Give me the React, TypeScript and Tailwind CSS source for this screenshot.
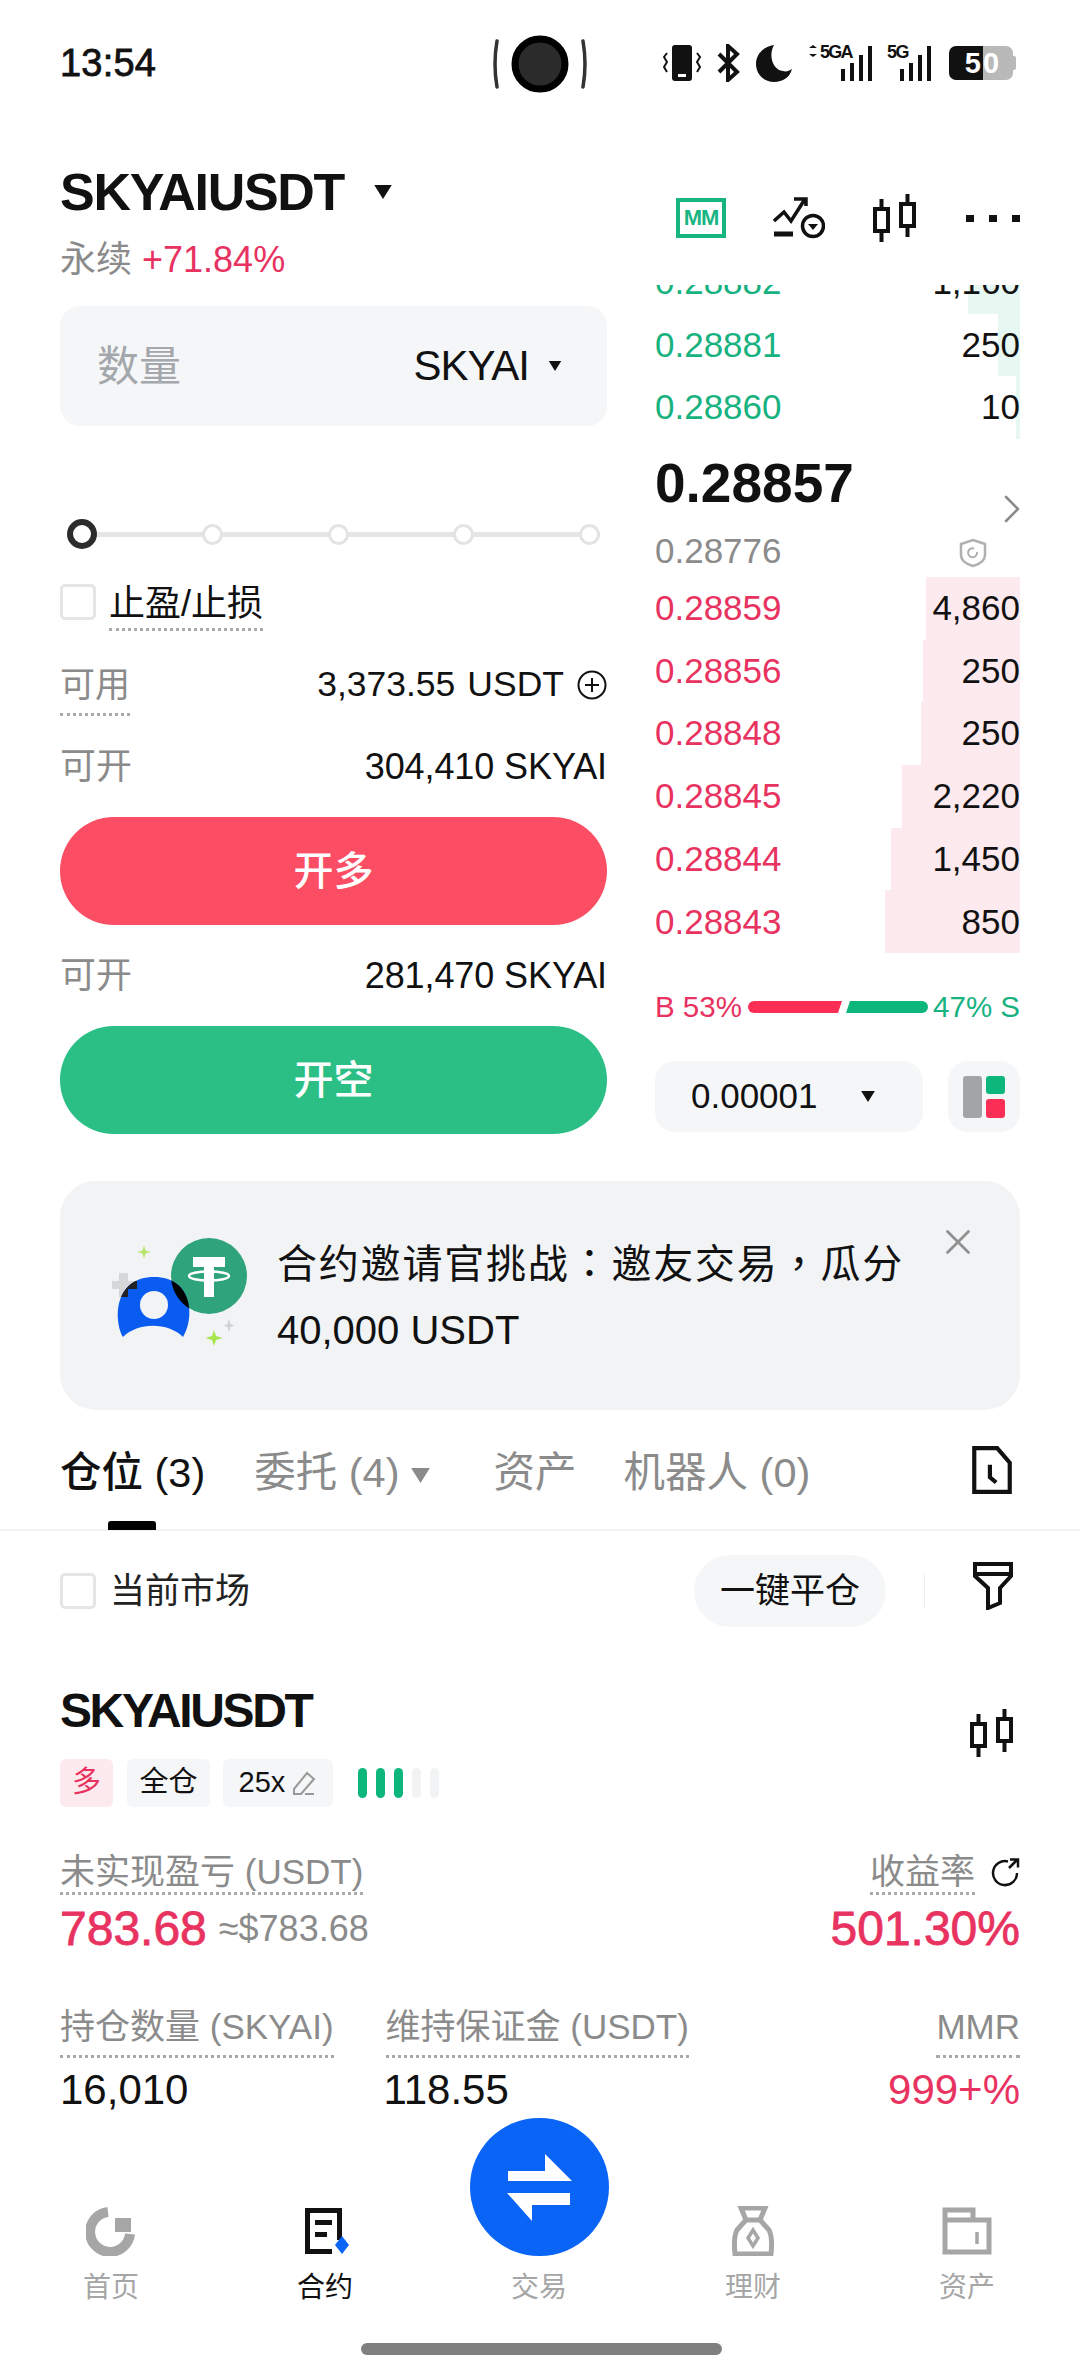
import React from "react";
import { X, ChevronRight } from "lucide-react";

const RED = "text-[#e8325f]";
const GREEN = "text-[#17b27f]";

const bids = [
  { p: "0.28882", q: "1,160", bar: 52 },
  { p: "0.28881", q: "250", bar: 22 },
  { p: "0.28860", q: "10", bar: 4 },
];
const asks = [
  { p: "0.28859", q: "4,860", bar: 94 },
  { p: "0.28856", q: "250", bar: 97 },
  { p: "0.28848", q: "250", bar: 99 },
  { p: "0.28845", q: "2,220", bar: 118 },
  { p: "0.28844", q: "1,450", bar: 129 },
  { p: "0.28843", q: "850", bar: 135 },
];

function Caret({ className }: { className: string }) {
  return (
    <svg viewBox="0 0 10 8" className={className} fill="currentColor">
      <path d="M0 0h10L5 8z" />
    </svg>
  );
}

function Candles({ className }: { className: string }) {
  return (
    <svg viewBox="0 0 46 50" className={className} fill="none" stroke="currentColor" strokeWidth="4">
      <rect x="3" y="16" width="13" height="22" />
      <path d="M9.500 6v10M9.500 38v11" />
      <rect x="29" y="11" width="13" height="22" />
      <path d="M35.500 1v10M35.500 33v11" />
    </svg>
  );
}

function OrderRow({ p, q, bar, tone, fill }: { p: string; q: string; bar: number; tone: string; fill: string }) {
  return (
    <div className="relative flex h-[62.7px] items-center justify-between text-[35px]">
      <div className={`absolute right-0 top-0 h-full ${fill}`} style={{ width: bar }} />
      <span className={`relative ${tone}`}>{p}</span>
      <span className="relative text-[#111]">{q}</span>
    </div>
  );
}

function StatusBar() {
  return (
    <div className="relative flex h-[126px] items-center justify-between pl-[60px] pr-[64px] text-[#111]">
      <span className="text-[38px] tracking-[0.2px] [-webkit-text-stroke:0.8px_#111]">13:54</span>
      <div className="absolute left-[493px] top-[33px] flex h-[62px] w-[94px] items-center justify-between">
        <svg viewBox="0 0 94 62" className="h-[62px] w-[94px]">
          <path d="M4 8q-4 23 0 46M90 8q4 23 0 46" fill="none" stroke="#333" strokeWidth="3.500" strokeLinecap="round" />
          <circle cx="47" cy="31" r="25" fill="#2b2b2b" stroke="#000" strokeWidth="7" />
        </svg>
      </div>
      <div className="flex items-center">
        <svg viewBox="0 0 38 38" className="h-[38px] w-[38px]" fill="#111">
          <rect x="9" y="1" width="20" height="36" rx="3" />
          <rect x="15" y="30" width="8" height="3" fill="#fff" />
          <path d="M4 9l-3 4 3 5-3 5 3 5M34 9l3 4-3 5 3 5-3 5" fill="none" stroke="#111" strokeWidth="2" />
        </svg>
        <svg viewBox="0 0 24 38" className="ml-[15px] h-[38px] w-[24px]" fill="none" stroke="#111" strokeWidth="4">
          <path d="M3 10l18 18-9 8V2l9 8L3 28" />
        </svg>
        <svg viewBox="0 0 38 38" className="ml-[15px] h-[38px] w-[38px]" fill="#111">
          <path d="M19 1C8 3 1 10 1 20c0 10 8 18 18 18 9 0 16-5 18-13-3 2-6 3-9 2C18 26 13 12 19 1z" />
        </svg>
        <div className="relative ml-[16px] h-[36px] w-[66px]">
          <svg viewBox="0 0 66 36" className="h-[36px] w-[66px]" fill="#111">
            <path d="M0 3l4-3 4 3zM0 9l4 3 4-3z" />
            <rect x="32" y="24" width="4" height="12" />
            <rect x="41" y="18" width="4" height="18" />
            <rect x="50" y="10" width="4" height="26" />
            <rect x="59" y="1" width="4" height="35" />
          </svg>
          <span className="absolute left-[11px] top-[-2px] text-[18px] font-bold leading-[18px] tracking-[-1.8px] text-[#111]">5GA</span>
        </div>
        <div className="relative ml-[12px] h-[36px] w-[51px]">
          <svg viewBox="0 0 51 36" className="h-[36px] w-[51px]" fill="#111">
            <rect x="13" y="24" width="4" height="12" />
            <rect x="22" y="18" width="4" height="18" />
            <rect x="31" y="10" width="4" height="26" />
            <rect x="40" y="1" width="4" height="35" />
          </svg>
          <span className="absolute left-0 top-[-2px] text-[18px] font-bold leading-[18px] tracking-[-1.5px] text-[#111]">5G</span>
        </div>
        <div className="ml-[11px] flex h-[34px] items-center">
          <div className="flex h-[34px] w-[34px] items-center justify-end rounded-l-[7px] bg-[#111] pr-[2px] text-[29px] font-bold leading-none text-white">5</div>
          <div className="flex h-[34px] w-[30px] items-center rounded-r-[7px] bg-[#b9b9b9] text-[29px] font-bold leading-none text-white">0</div>
          <div className="h-[14px] w-[3px] rounded-r-[2px] bg-[#b9b9b9]" />
        </div>
      </div>
    </div>
  );
}

function TitleBar() {
  return (
    <div className="flex h-[159px] items-start justify-between pl-[60px] pr-[60px]">
      <div>
        <div className="mt-[36px] flex h-[60px] items-center">
          <span className="text-[52px] font-bold leading-none tracking-[-1.3px] text-[#111]">SKYAIUSDT</span>
          <Caret className="ml-[28px] h-[14px] w-[22px] text-[#111]" />
        </div>
        <div className="mt-[17px] flex h-[42px] items-center text-[36px] leading-none">
          <span className="text-[#8b8b8b]">永续</span>
          <span className={`ml-[10px] ${RED}`}>+71.84%</span>
        </div>
      </div>
      <div className="mt-[67px] flex items-center">
        <div className="flex h-[40px] w-[50px] items-center justify-center border-[4px] border-[#18b583] text-[22px] font-bold leading-none tracking-[-1px] text-[#18b583]">MM</div>
        <svg viewBox="0 0 52 42" className="ml-[47px] h-[42px] w-[52px]" fill="none" stroke="#111" strokeWidth="3.500">
          <path d="M1 24l10-9 7 9L32 2M21 2h12v7" />
          <path d="M1 37h19" strokeWidth="5" />
          <circle cx="40" cy="29" r="10.500" />
          <path d="M35 27h10l-5 6z" fill="#111" stroke="none" />
        </svg>
        <Candles className="ml-[47px] h-[50px] w-[46px] text-[#111]" />
        <div className="ml-[48px] flex w-[54px] justify-between">
          <span className="h-[7px] w-[8px] bg-[#111]" />
          <span className="h-[7px] w-[8px] bg-[#111]" />
          <span className="h-[7px] w-[8px] bg-[#111]" />
        </div>
      </div>
    </div>
  );
}

function OrderForm() {
  return (
    <div className="flex w-[547px] flex-col">
      <div className="mt-[21px] flex h-[120px] items-center justify-between rounded-[20px] bg-[#f5f6f7] pl-[37px] pr-[44px]">
        <span className="text-[42px] text-[#a4a7ab]">数量</span>
        <div className="flex items-center">
          <span className="text-[42px] leading-none tracking-[-1px] text-[#111]">SKYAI</span>
          <Caret className="ml-[18px] h-[10px] w-[16px] text-[#111]" />
        </div>
      </div>

      <div className="relative mt-[94px] flex h-[28px] w-[540px] items-center justify-between pl-[7px]">
        <div className="absolute left-[8px] right-0 top-[12px] h-[5px] bg-[#e4e5e6]" />
        <span className="relative h-[30px] w-[30px] rounded-full border-[6px] border-[#2c2c2c] bg-white" />
        <span className="relative h-[21px] w-[21px] rounded-full border-[3px] border-[#e2e3e4] bg-white" />
        <span className="relative h-[21px] w-[21px] rounded-full border-[3px] border-[#e2e3e4] bg-white" />
        <span className="relative h-[21px] w-[21px] rounded-full border-[3px] border-[#e2e3e4] bg-white" />
        <span className="relative h-[21px] w-[21px] rounded-full border-[3px] border-[#e2e3e4] bg-white" />
      </div>

      <div className="mt-[34px] flex items-start">
        <span className="mt-[2px] h-[36px] w-[36px] rounded-[5px] border-[3px] border-[#e4e5e6]" />
        <span className="ml-[13px] border-b-[3px] border-dotted border-[#aaa] pb-[2px] text-[36px] leading-[44px] text-[#111]">止盈/止损</span>
      </div>

      <div className="mt-[32px] flex items-start justify-between">
        <span className="border-b-[3px] border-dotted border-[#aaa] pb-[6px] text-[35px] leading-[44px] text-[#8b8b8b]">可用</span>
        <div className="flex h-[44px] items-center text-[35.5px] text-[#111]">
          <span>3,373.55</span>
          <span className="ml-[12px]">USDT</span>
          <svg viewBox="0 0 30 30" className="ml-[13px] h-[30px] w-[30px]" fill="none" stroke="#111" strokeWidth="2">
            <circle cx="15" cy="15" r="13.500" />
            <path d="M15 8v14M8 15h14" />
          </svg>
        </div>
      </div>

      <div className="mt-[29px] flex h-[44px] items-center justify-between text-[36px]">
        <span className="text-[#8b8b8b]">可开</span>
        <span className="tracking-[-0.1px] text-[#111]">304,410 SKYAI</span>
      </div>

      <div className="mt-[28px] flex h-[108px] items-center justify-center rounded-full bg-[#fb4d63] text-[40px] font-medium text-white">开多</div>

      <div className="mt-[29px] flex h-[44px] items-center justify-between text-[36px]">
        <span className="text-[#8b8b8b]">可开</span>
        <span className="tracking-[-0.1px] text-[#111]">281,470 SKYAI</span>
      </div>

      <div className="mt-[28px] flex h-[108px] items-center justify-center rounded-full bg-[#2bbf86] text-[40px] font-medium text-white">开空</div>
    </div>
  );
}

function OrderBook() {
  return (
    <div className="flex w-[365px] flex-col">
      <div className="h-[154px] overflow-hidden">
        <div className="-mt-[34px]">
          {bids.map((r) => (
            <OrderRow key={r.p} {...r} tone={GREEN} fill="bg-[#e6f8f1]" />
          ))}
        </div>
      </div>

      <div className="relative h-[138px]">
        <div className="mt-[14px] text-[55px] font-bold leading-[60px] text-[#111]">0.28857</div>
        <div className="absolute left-0 top-[92px] text-[35px] leading-[40px] text-[#8b8b8b]">0.28776</div>
        <ChevronRight className="absolute right-[-16px] top-[46px] h-[48px] w-[48px] text-[#8b8b8b]" strokeWidth={1.3} />
        <svg viewBox="0 0 28 30" className="absolute left-[304px] top-[99px] h-[30px] w-[28px]" fill="none" stroke="#aeb0b3" strokeWidth="2.500">
          <path d="M14 2l12 4v11c0 5-5 9-12 11C7 26 2 22 2 17V6z" />
          <path d="M18 14a4.500 4.500 0 1 1-3-3.500" strokeWidth="2" />
        </svg>
      </div>

      <div>
        {asks.map((r) => (
          <OrderRow key={r.p} {...r} tone={RED} fill="bg-[#fdeaee]" />
        ))}
      </div>

      <div className="mt-[34px] flex h-[40px] items-center justify-between text-[29.5px]">
        <span className={RED}>B 53%</span>
        <div className="flex items-center">
          <svg viewBox="0 0 180 12" className="h-[12px] w-[180px]">
            <path d="M6 0h88l-4 12H6a6 6 0 0 1 0-12z" fill="#fb2f55" />
            <path d="M102 0h72a6 6 0 0 1 0 12H98z" fill="#0db77b" />
          </svg>
        </div>
        <span className={GREEN}>47% S</span>
      </div>

      <div className="mt-[34px] flex h-[71px] justify-between">
        <div className="flex w-[268px] items-center rounded-[20px] bg-[#f5f6f7] pl-[36px]">
          <span className="text-[35px] text-[#111]">0.00001</span>
          <Caret className="ml-[42px] h-[11px] w-[16px] text-[#111]" />
        </div>
        <div className="flex w-[72px] items-center justify-center gap-[4px] rounded-[20px] bg-[#f5f6f7]">
          <span className="h-[42px] w-[19px] rounded-[3px] bg-[#a2a4a7]" />
          <div className="flex flex-col gap-[5px]">
            <span className="h-[18px] w-[19px] rounded-[3px] bg-[#0db77b]" />
            <span className="h-[19px] w-[19px] rounded-[3px] bg-[#fb2f55]" />
          </div>
        </div>
      </div>
    </div>
  );
}

const PERSON = "M13 111C3 92 5 51 44 51C83 51 85 92 73 111C58 96 28 96 13 111Z";
const PLUS = "M9 47h9v8h9v8h-9v8H9v-8H2v-8h7z";

function PromoBanner() {
  return (
    <div className="relative mx-[60px] mt-[47px] flex h-[229px] items-center rounded-[36px] bg-[#f1f3f5]">
      <svg viewBox="0 0 170 140" className="ml-[50px] h-[140px] w-[170px] shrink-0">
        <defs>
          <clipPath id="person-shape">
            <path d={PERSON} />
          </clipPath>
        </defs>
        <path d={PLUS} fill="#d6d7d9" />
        <path d="M34 19l1.500 5.500 5 1.500-5 1.500L34 33l-1.500-5.500-5-1.500 5-1.500z" fill="#b9e46a" />
        <path d="M104 104l2 6 6.500 2-6.500 2-2 6-2-6-6.500-2 6.500-2z" fill="#a8e64d" />
        <path d="M119 93l1.500 5 4 1.500-4 1.500-1.500 5-1.500-5-4-1.500 4-1.500z" fill="#cfd1d4" />
        <circle cx="99" cy="50" r="38" fill="#2ea37c" />
        <path d={PERSON} fill="#0a5cf0" />
        <circle cx="99" cy="50" r="38" fill="#000" clipPath="url(#person-shape)" />
        <path d={PLUS} fill="#222" clipPath="url(#person-shape)" />
        <circle cx="44" cy="79" r="14" fill="#f1f3f5" />
        <path d="M83 31h32v10h-11v30H94V41H83z" fill="#fff" />
        <ellipse cx="99" cy="50" rx="20" ry="4.500" fill="none" stroke="#fff" strokeWidth="2.500" />
      </svg>
      <div className="ml-[-3px] text-[40px] leading-[66px] text-[#111]">
        <div className="tracking-[1.8px]">
          合约邀请官挑战<span className="[font-family:'Noto_Sans_CJK_TC',sans-serif]">：</span>邀友交易<span className="[font-family:'Noto_Sans_CJK_TC',sans-serif]">，</span>瓜分
        </div>
        <div>40,000 USDT</div>
      </div>
      <X className="absolute right-[41px] top-[40px] h-[42px] w-[42px] text-[#909090]" strokeWidth={1.6} />
    </div>
  );
}

function PositionTabs() {
  return (
    <div className="relative flex h-[121px] border-b-[2px] border-[#f2f2f2] pl-[60px] pr-[68px] pt-[38px] text-[41.5px] leading-[50px] text-[#8b8b8b]">
      <span className="font-medium text-[#111]">仓位 (3)</span>
      <span className="ml-[49px]">委托 (4)</span>
      <Caret className="ml-[9px] mt-[20px] h-[15px] w-[23px]" />
      <span className="ml-[62px]">资产</span>
      <span className="ml-[47px]">机器人 (0)</span>
      <svg viewBox="0 0 38 46" className="ml-auto mt-[-2px] h-[48px] w-[40px]" fill="none" stroke="#111" strokeWidth="4">
        <path d="M2 2h22l12 14v28H2z" />
        <path d="M17 18v12l6 5" />
      </svg>
      <span className="absolute bottom-[-1px] left-[108px] h-[9px] w-[48px] rounded-t-[3px] bg-black" />
    </div>
  );
}

function FilterRow() {
  return (
    <div className="flex h-[120px] items-center pl-[60px] pr-[67px]">
      <span className="h-[36px] w-[36px] rounded-[5px] border-[3px] border-[#e4e5e6]" />
      <span className="ml-[14px] text-[35px] text-[#222]">当前市场</span>
      <div className="ml-auto flex h-[72px] w-[192px] items-center justify-center rounded-full bg-[#f5f6f7] text-[35px] text-[#111]">一键平仓</div>
      <span className="ml-[38px] h-[36px] w-[1px] bg-[#eee]" />
      <svg viewBox="0 0 40 48" className="ml-[48px] mt-[-11px] h-[48px] w-[40px]" fill="none" stroke="#111" strokeWidth="4">
        <path d="M2 2h36v12L27 26v15l-12 5V26L2 14z" />
        <path d="M2 12h36" />
      </svg>
    </div>
  );
}

function LabelDotted({ children, className = "" }: { children: React.ReactNode; className?: string }) {
  return (
    <span className={`border-b-[3px] border-dotted border-[#aaa] text-[35px] leading-[40px] text-[#8b8b8b] ${className}`}>{children}</span>
  );
}

function PositionCard() {
  return (
    <div className="px-[60px]">
      <div className="mt-[34px] flex h-[52px] items-start justify-between">
        <span className="text-[48px] font-bold leading-[52px] tracking-[-2.400px] text-[#111]">SKYAIUSDT</span>
        <Candles className="mt-[23px] mr-[5px] h-[50px] w-[46px] shrink-0 text-[#111]" />
      </div>

      <div className="mt-[22px] flex h-[48px] items-center text-[29px] text-[#111]">
        <span className={`flex h-full w-[53px] items-center justify-center rounded-[6px] bg-[#fdeaee] ${RED}`}>多</span>
        <span className="ml-[14px] flex h-full w-[83px] items-center justify-center rounded-[6px] bg-[#f5f6f7]">全仓</span>
        <span className="ml-[13px] flex h-full w-[110px] items-center justify-center rounded-[6px] bg-[#f5f6f7]">
          25x
          <svg viewBox="0 0 26 26" className="ml-[6px] h-[26px] w-[26px]" fill="none" stroke="#999" strokeWidth="2">
            <path d="M3 19L16 3l7 6L10 24H3zM14 24h9" />
          </svg>
        </span>
        <div className="ml-[25px] flex h-[30px] gap-[9px]">
          <span className="w-[9px] rounded-full bg-[#0db77b]" />
          <span className="w-[9px] rounded-full bg-[#0db77b]" />
          <span className="w-[9px] rounded-full bg-[#0db77b]" />
          <span className="w-[9px] rounded-full bg-[#f2f3f4]" />
          <span className="w-[9px] rounded-full bg-[#f2f3f4]" />
        </div>
      </div>

      <div className="mt-[45px] flex items-start justify-between">
        <LabelDotted>未实现盈亏 (USDT)</LabelDotted>
        <div className="flex items-start">
          <LabelDotted>收益率</LabelDotted>
          <svg viewBox="0 0 30 30" className="ml-[15px] mt-[5px] h-[30px] w-[30px]" fill="none" stroke="#111" strokeWidth="2.500">
            <path d="M18 4.500A12 12 0 1 0 27 16" />
            <path d="M19 11l8-8M20 2.500h8v8" />
          </svg>
        </div>
      </div>
      <div className="mt-[6px] flex h-[56px] items-center justify-between">
        <div className="flex items-center">
          <span className={`text-[48px] leading-none [-webkit-text-stroke:0.8px_#e8325f] ${RED}`}>783.68</span>
          <span className="ml-[12px] text-[36px] text-[#8b8b8b]">≈$783.68</span>
        </div>
        <span className={`text-[48px] leading-none [-webkit-text-stroke:0.8px_#e8325f] ${RED}`}>501.30%</span>
      </div>

      <div className="mt-[50px] flex items-start">
        <LabelDotted className="pb-[8px]">持仓数量 (SKYAI)</LabelDotted>
        <LabelDotted className="ml-[52px] pb-[8px]">维持保证金 (USDT)</LabelDotted>
        <LabelDotted className="ml-auto pb-[8px]">MMR</LabelDotted>
      </div>
      <div className="mt-[7px] flex text-[42px] leading-[50px] text-[#111]">
        <span>16,010</span>
        <span className="ml-[195px]">118.55</span>
        <span className={`ml-auto ${RED}`}>999+%</span>
      </div>
    </div>
  );
}

function NavItem({ label, active, children }: { label: string; active?: boolean; children: React.ReactNode }) {
  return (
    <div className="flex w-[215px] flex-col items-center">
      <div className="flex h-[50px] items-center justify-center">{children}</div>
      <span className={`mt-[14px] text-[28px] leading-[36px] ${active ? "text-[#111]" : "text-[#a6a6a6]"}`}>{label}</span>
    </div>
  );
}

function BottomNav() {
  return (
    <div className="absolute bottom-0 left-0 h-[262px] w-full bg-white">
      <div className="absolute left-[470px] top-[4px] flex h-[138px] w-[139px] items-center justify-center rounded-full bg-[#0a64f5]">
        <svg viewBox="0 0 66 67" className="h-[67px] w-[66px]" fill="#fff">
          <path d="M38 0l27 27H1V17h37zM25 67L0 39h63v12H25z" />
        </svg>
      </div>
      <div className="flex justify-between pl-[4px] pr-[6px] pt-[92px]">
        <NavItem label="首页">
          <svg viewBox="0 0 50 50" className="h-[50px] w-[50px]" fill="none" stroke="#a6a6a6" strokeWidth="10">
            <path d="M22 6a20 20 0 1 0 22 22" />
            <rect x="29" y="12" width="16" height="14" fill="#a6a6a6" stroke="none" />
          </svg>
        </NavItem>
        <NavItem label="合约" active>
          <svg viewBox="0 0 50 50" className="h-[50px] w-[50px]">
            <path d="M5 2h37v32h-5V7H10v36h22v5H5z" fill="#111" />
            <path d="M15 14h17v5H15zM15 26h12v5H15z" fill="#111" />
            <path d="M42 30l7 9-7 9-7-9z" fill="#0a64f5" />
          </svg>
        </NavItem>
        <NavItem label="交易">
          <span className="w-[50px]" />
        </NavItem>
        <NavItem label="理财">
          <svg viewBox="0 0 50 50" className="h-[50px] w-[50px]" fill="none" stroke="#a6a6a6" strokeWidth="5">
            <path d="M13 2h24l-5 12 9 10c3 6 3 15 2 24H7c-1-9-1-18 2-24l9-10z" />
            <path d="M18 14h14" />
            <path d="M25 24l5 8-5 8-5-8z" strokeWidth="3.500" />
          </svg>
        </NavItem>
        <NavItem label="资产">
          <svg viewBox="0 0 50 50" className="h-[50px] w-[50px]" fill="none" stroke="#a6a6a6" strokeWidth="5">
            <path d="M3 14V4h28v10M3 14h44v32H3z" />
            <path d="M35 26v12" strokeWidth="3.500" />
          </svg>
        </NavItem>
      </div>
      <div className="absolute bottom-[21px] left-[361px] h-[12px] w-[361px] rounded-full bg-[#808080]" />
    </div>
  );
}

export default function App() {
  return (
    <div className="relative h-[2376px] w-[1080px] overflow-hidden bg-white [font-family:'Liberation_Sans','Noto_Sans_CJK_SC',sans-serif]">
      <StatusBar />
      <TitleBar />
      <div className="flex justify-between px-[60px]">
        <OrderForm />
        <OrderBook />
      </div>
      <PromoBanner />
      <PositionTabs />
      <FilterRow />
      <PositionCard />
      <BottomNav />
    </div>
  );
}
